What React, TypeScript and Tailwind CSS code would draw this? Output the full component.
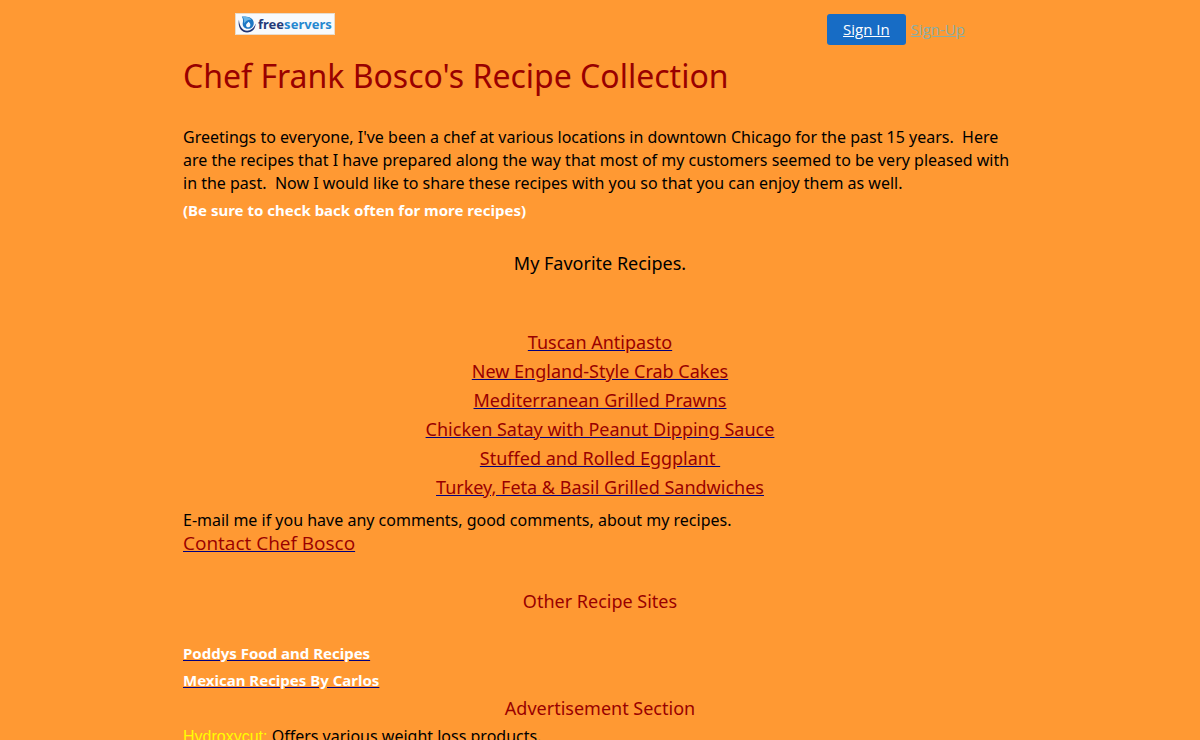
const recipes = [
  'Tuscan Antipasto',
  'New England-Style Crab Cakes',
  'Mediterranean Grilled Prawns',
  'Chicken Satay with Peanut Dipping Sauce',
  'Stuffed and Rolled Eggplant\u00a0',
  'Turkey, Feta & Basil Grilled Sandwiches',
];

const recipeSites = ['Poddys Food and Recipes', 'Mexican Recipes By Carlos'];

const Logo = () => (
  <a href="#" aria-label="freeservers" className="flex h-[22px] items-center border border-[#e8dccb] bg-[#f8fafc] px-[2px]">
    <svg viewBox="0 0 20 20" className="h-[19px] w-[19px] shrink-0" aria-hidden="true">
      <path d="M1 5C-.5 12 3 18.500 9.500 18.500c5.500 0 9-4 9-9.500-1.500 5-5 7.500-9 7.500C5 16.500 1.500 12 1 5z" fill="#203474" />
      <path d="M4 1.500c5 0 9 0 11.500 3.500 2.500 4 .5 9-4 9.500C7 15 4.500 12 5 8.500 5.500 6 5.500 4 4 1.500z" fill="#1c78c4" />
      <path d="M5 2c4-.5 8 .5 9 3-3-.5-6 1-7.500 4C6.500 6 6.500 4 5 2z" fill="#69b7e8" />
      <path d="M11 7c1.500 1 2 2 2 3.500s-1 2.500-2.300 2.500S8.500 12 8.500 10.500C8.500 9 10 8.500 11 7z" fill="#f8fafc" />
    </svg>
    <span className="pl-px font-['Noto_Sans',sans-serif] text-[13px] leading-5 font-bold text-[#243a78]">
      free<span className="text-[#2588d0]">servers</span>
    </span>
  </a>
);

const Header = () => (
  <header className="mx-auto flex w-full max-w-[730px] items-start justify-between pt-[13px]">
    <Logo />
    <nav className="flex items-center gap-[5px] pt-px font-['Open_Sans',sans-serif] text-[15px]">
      <a href="#" className="rounded-[3px] bg-[#176cc5] px-4 py-1 leading-[23px] text-white underline">
        Sign In
      </a>
      <a href="#" className="text-[#8aaea6] underline">
        Sign-Up
      </a>
    </nav>
  </header>
);

const App = () => {
  return (
    <div className="min-h-screen bg-[#ff9933] font-['Comic_Sans_MS','Noto_Sans',sans-serif] text-base leading-[23px] text-black">
      <Header />
      <main className="mx-auto w-full max-w-[834px]">
        <h1 className="mt-2 text-[32px] leading-[45px] text-[#990000]">Chef Frank Bosco's Recipe Collection</h1>

        <p className="mt-7">
          Greetings to everyone, I've been a chef at various locations in downtown Chicago for the past 15 years.&nbsp; Here
          are the recipes that I have prepared along the way that most of my customers seemed to be very pleased with
          in the past.&nbsp; Now I would like to share these recipes with you so that you can enjoy them as well.
        </p>
        <p className="mt-1 text-[15px] font-bold text-white">(Be sure to check back often for more recipes)</p>

        <h2 className="mt-[27px] text-center text-lg leading-[29px]">My Favorite Recipes.</h2>

        <ul className="mt-[50px] text-center text-lg leading-[29px]">
          {recipes.map((recipe) => (
            <li key={recipe}>
              <a href="#" className="text-[#990000] underline decoration-[#000080]">
                {recipe}
              </a>
            </li>
          ))}
        </ul>

        <p className="mt-[7px]">E-mail me if you have any comments, good comments, about my recipes.</p>
        <a
          href="#"
          className="block w-fit font-['Open_Sans',sans-serif] text-[19px] leading-[23px] text-[#990000] underline decoration-[#000080]"
        >
          Contact Chef Bosco
        </a>

        <h2 className="mt-8 text-center text-lg leading-[29px] text-[#990000]">Other Recipe Sites</h2>

        <ul className="mt-6 text-[15px] leading-[27px] font-bold">
          {recipeSites.map((site) => (
            <li key={site}>
              <a href="#" className="text-white underline decoration-[#000080]">
                {site}
              </a>
            </li>
          ))}
        </ul>

        <h2 className="text-center text-lg leading-[29px] text-[#990000]">Advertisement Section</h2>
        <p className="mt-[2px]">
          <a href="#" className="font-['Liberation_Sans',sans-serif] text-[#ffff00]">
            Hydroxycut:
          </a>{' '}
          Offers various weight loss products.
        </p>
      </main>
    </div>
  );
};

export default App;
